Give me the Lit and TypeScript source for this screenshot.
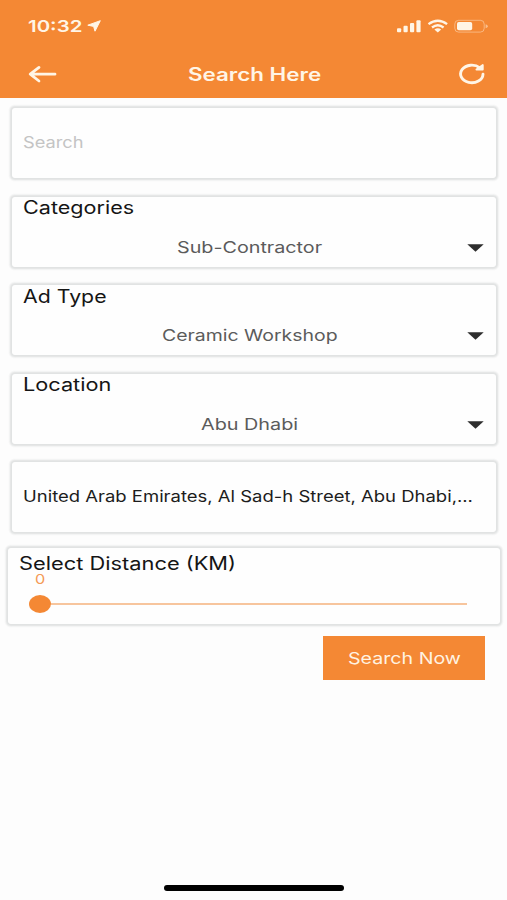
import { LitElement, html, css } from "lit";
import { customElement, property } from "lit/decorators.js";

/* A single line of text set wide: its glyphs are stretched to a given width. */
@customElement("wide-text")
class WideText extends LitElement {
  @property({ type: Number }) width = 100;

  static styles = css`
    :host {
      display: block;
      white-space: nowrap;
      text-align: left;
      height: 24px;
      line-height: 24px;
    }
    .line {
      display: inline-block;
      transform-origin: 0 50%;
    }
  `;

  private fit() {
    const line = this.renderRoot.querySelector(".line") as HTMLElement;
    const natural = line.offsetWidth;
    this.style.width = `${this.width}px`;
    if (natural > 0) line.style.transform = `scaleX(${this.width / natural})`;
  }

  firstUpdated() {
    this.fit();
    document.fonts.ready.then(() => this.fit());
  }

  render() {
    return html`<span class="line"><slot></slot></span>`;
  }
}

@customElement("status-bar")
class StatusBar extends LitElement {
  static styles = css`
    :host {
      display: flex;
      align-items: center;
      height: 52px;
      padding: 0 19px 0 28px;
      box-sizing: border-box;
      color: #fff5e6;
      fill: currentColor;
    }
    .time {
      font-size: 16.5px;
      font-weight: 600;
    }
    .arrow {
      margin-left: 4px;
    }
    .signals {
      margin-left: auto;
      display: flex;
    }
    svg {
      display: block;
    }
  `;
  render() {
    return html`
      <wide-text class="time" .width=${54.5}>10:32</wide-text>
      <svg class="arrow" width="14" height="12" viewBox="0 0 14 12">
        <path d="M13.3 0.7 L0.8 5.2 L6.6 6.4 L8 11.2 Z" stroke="currentColor" stroke-width="1" stroke-linejoin="round" />
      </svg>
      <div class="signals">
        <svg width="91" height="14" viewBox="0 0 91 14">
          <rect x="0" y="9.2" width="4.2" height="4" rx="1" />
          <rect x="6.5" y="6.8" width="4.2" height="6.4" rx="1" />
          <rect x="13" y="4.1" width="4.2" height="9.1" rx="1" />
          <rect x="19.4" y="1.3" width="4.2" height="11.9" rx="1" />
          <g fill="none" stroke="currentColor" stroke-width="2.3">
            <path d="M31.5 5.2 Q40.8 -1.8 50.1 5.2" />
            <path d="M35 8.5 Q40.8 4 46.6 8.5" />
          </g>
          <path d="M37.4 10.4 Q40.8 8.2 44.2 10.4 L40.8 13.4 Z" />
          <rect x="57.8" y="1.3" width="29.4" height="11.8" rx="3.8" fill="none" stroke="currentColor" stroke-opacity=".42" />
          <rect x="60" y="3" width="15.2" height="8.3" rx="1.8" />
          <path d="M88.6 5.2 Q90.8 5.6 90.8 7.2 Q90.8 8.8 88.6 9.2 Z" fill-opacity=".5" />
        </svg>
      </div>
    `;
  }
}

@customElement("title-bar")
class TitleBar extends LitElement {
  static styles = css`
    :host {
      display: grid;
      grid-template-columns: 1fr auto 1fr;
      align-items: center;
      height: 46px;
      padding: 0 21px 2px 28px;
      box-sizing: border-box;
      color: #fff5e6;
    }
    .title {
      font-size: 18px;
      font-weight: 600;
      margin: 2px 6px 0 0;
    }
    .reload {
      justify-self: end;
    }
    svg {
      display: block;
      fill: none;
      stroke: currentColor;
      stroke-linecap: round;
      stroke-linejoin: round;
    }
  `;
  render() {
    return html`
      <svg width="30" height="18" viewBox="0 0 30 18">
        <path d="M27 9.2 H2.4 M11 2.4 L2.2 9.2 L11 16" stroke-width="2.8" />
      </svg>
      <wide-text class="title" .width=${133}>Search Here</wide-text>
      <svg class="reload" width="28" height="22" viewBox="0 0 28 22">
        <path d="M25 11.2 A11.2 8.8 0 1 1 21.8 4.8" stroke-width="2.9" />
        <path d="M24.8 2 V6.6 H18.4 Z" fill="currentColor" stroke-width="1.8" />
      </svg>
    `;
  }
}

@customElement("select-card")
class SelectCard extends LitElement {
  @property() label = "";
  @property() value = "";
  @property({ type: Number }) labelWidth = 100;
  @property({ type: Number }) valueWidth = 100;

  static styles = css`
    :host {
      display: flex;
      flex-direction: column;
    }
    .label {
      font-size: 18px;
      color: #151515;
      margin: -0.5px 0 0 10.5px;
    }
    .row {
      display: grid;
      grid-template-columns: 1fr auto 1fr;
      align-items: center;
      margin-top: 14.5px;
      padding: 0 12px 0 0;
    }
    .value {
      font-size: 16px;
      color: #5b5b5b;
      grid-column: 2;
      margin-left: 3px;
    }
    .caret {
      justify-self: end;
      display: block;
      fill: #2e2e2e;
      margin-top: 2px;
    }
  `;
  render() {
    return html`
      <wide-text class="label" .width=${this.labelWidth}>${this.label}</wide-text>
      <div class="row">
        <wide-text class="value" .width=${this.valueWidth}>${this.value}</wide-text>
        <svg class="caret" width="17" height="8" viewBox="0 0 17 8"><path d="M0.3 0.2 H16.7 L8.5 7.8 Z" /></svg>
      </div>
    `;
  }
}

const selects = [
  { label: "Categories", value: "Sub-Contractor", labelWidth: 111.5, valueWidth: 145.5 },
  { label: "Ad Type", value: "Ceramic Workshop", labelWidth: 84, valueWidth: 175 },
  { label: "Location", value: "Abu Dhabi", labelWidth: 88, valueWidth: 96.5 },
];

@customElement("app-root")
class AppRoot extends LitElement {
  static styles = css`
    :host {
      display: flex;
      flex-direction: column;
      height: 900px;
      background: #fdfdfd;
      font-family: Inter, "Liberation Sans", sans-serif;
      overflow: hidden;
    }
    .top {
      background: #f48834;
      height: 98px;
    }
    .cards {
      display: flex;
      flex-direction: column;
      gap: 18.5px;
      padding: 10px 11px 0 12px;
    }
    .card {
      height: 70px;
      box-sizing: border-box;
      background: #fefefe;
      border-radius: 3px;
      box-shadow: 0 0 2px 1.5px #e0e2e2, 0 0 3px 2px #f3f3f3;
    }
    .field {
      display: flex;
      align-items: center;
      padding-left: 10.5px;
    }
    .hint {
      font-size: 15.5px;
      color: #c4c4c4;
    }
    .address {
      font-size: 15.5px;
      color: #1c1c1c;
    }
    .distance {
      height: 76px;
      margin: 15.5px 7px 0 8px;
      display: flex;
      flex-direction: column;
    }
    .caption {
      font-size: 18px;
      color: #151515;
      height: 18px;
      line-height: 18px;
      margin: 7.5px 0 0 10.5px;
    }
    .km {
      font-size: 13px;
      color: #f49a55;
      height: 12px;
      line-height: 12px;
      margin: 0 0 0 27px;
    }
    .slider {
      display: flex;
      align-items: center;
      margin: 10px 33px 0 21px;
    }
    .thumb {
      width: 22px;
      height: 18px;
      border-radius: 50%;
      background: #f48834;
    }
    .track {
      flex: 1;
      height: 2px;
      background: #f7c59d;
    }
    .submit {
      align-self: flex-end;
      margin: 12px 22px 0 0;
      width: 162px;
      height: 44px;
      border: 0;
      padding: 0;
      display: flex;
      align-items: center;
      justify-content: center;
      background: #f48834;
      color: #fff3e2;
      font-family: inherit;
      font-size: 16.5px;
    }
    .home {
      margin: auto auto 9px 164px;
      width: 180px;
      height: 6px;
      border-radius: 3px;
      background: #000;
    }
  `;

  render() {
    return html`
      <header class="top">
        <status-bar></status-bar>
        <title-bar></title-bar>
      </header>
      <main class="cards">
        <div class="card field"><wide-text class="hint" .width=${60}>Search</wide-text></div>
        ${selects.map(
          (s) => html`<select-card
            class="card"
            .label=${s.label}
            .value=${s.value}
            .labelWidth=${s.labelWidth}
            .valueWidth=${s.valueWidth}
          ></select-card>`
        )}
        <div class="card field">
          <wide-text class="address" .width=${450.5}>United Arab Emirates, Al Sad-h Street, Abu Dhabi,...</wide-text>
        </div>
      </main>
      <section class="card distance">
        <wide-text class="caption" .width=${217}>Select Distance (KM)</wide-text>
        <wide-text class="km" .width=${10}>0</wide-text>
        <div class="slider"><div class="thumb"></div><div class="track"></div></div>
      </section>
      <button class="submit"><wide-text .width=${113}>Search Now</wide-text></button>
      <div class="home"></div>
    `;
  }
}
